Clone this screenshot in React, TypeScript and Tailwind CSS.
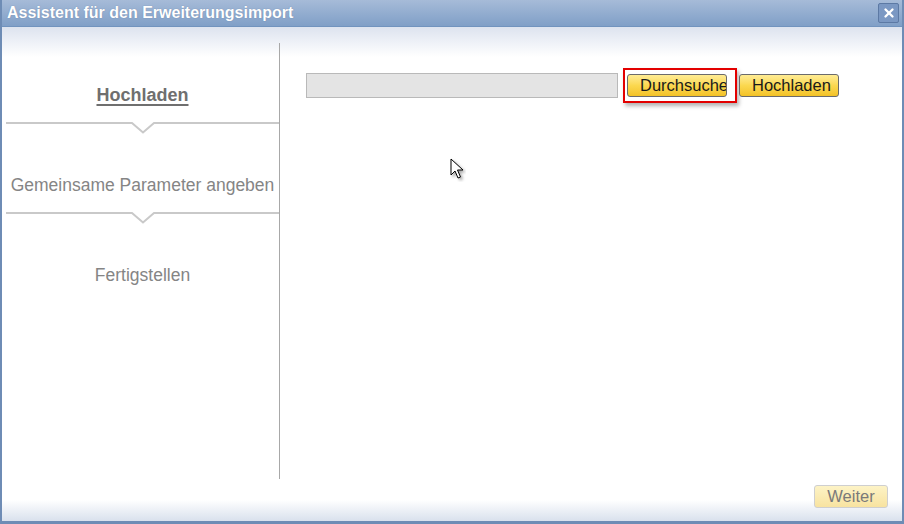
import { X } from 'lucide-react';

const steps = [
  { label: 'Hochladen', active: true, pt: 'pt-[41px]', h: 'h-[79px]' },
  { label: 'Gemeinsame Parameter angeben', active: false, pt: 'pt-[40px]', h: 'h-[78px]' },
  { label: 'Fertigstellen', active: false, pt: 'pt-[40px]', h: '' },
];

function Separator() {
  return (
    <svg width="273" height="12" className="block" viewBox="0 0 273 12">
      <polyline
        points="0,1 126,1 137,10.5 148,1 273,1"
        fill="none"
        stroke="#c9c9c9"
        strokeWidth="2"
      />
    </svg>
  );
}

function YellowButton({ label, width }: { label: string; width: string }) {
  return (
    <button
      className={`${width} h-[23px] shrink-0 overflow-hidden whitespace-nowrap rounded-[3px] border border-[#6b6b6b] bg-gradient-to-b from-[#ffec93] via-[#fbd84f] to-[#f3c225] pl-[12px] text-left text-[16.5px] leading-[21px] text-[#1a1a1a]`}
    >
      {label}
    </button>
  );
}

export default function App() {
  return (
    <div className="relative flex h-[524px] w-[904px] flex-col border-x-2 border-b-[3px] border-[#6e8cb5] bg-white font-['Liberation_Sans',Arial,sans-serif]">
      {/* title bar */}
      <div className="flex h-[27px] shrink-0 items-center justify-between border-b border-[#7193be] bg-gradient-to-b from-[#a6bbd8] to-[#809fc7] pl-[5px] pr-[3px]">
        <span className="text-[16px] font-bold text-white [text-shadow:0_0_1px_rgba(60,80,120,0.5)]">
          Assistent für den Erweiterungsimport
        </span>
        <div className="flex h-[20px] w-[21px] items-center justify-center rounded-[2px] border border-[#5c79a4] bg-[#7b98c3]">
          <X className="h-[14px] w-[14px] text-white" strokeWidth={4} />
        </div>
      </div>

      {/* body */}
      <div className="flex flex-1 flex-col bg-[linear-gradient(#dde3ef,#ffffff_30px)]">
        <div className="mt-[16px] flex h-[436px]">
          <div className="flex w-[278px] shrink-0 flex-col border-r border-[#a8a8a8] pl-[4px]">
            {steps.map((step, i) => (
              <div key={step.label}>
                <div className={`${step.pt} ${step.h} text-center`}>
                  {step.active ? (
                    <span className="text-[18px] font-bold leading-[22px] text-[#6f6f6f] underline decoration-2 underline-offset-[3px]">
                      {step.label}
                    </span>
                  ) : (
                    <span className="text-[17.5px] leading-[22px] text-[#858585]">{step.label}</span>
                  )}
                </div>
                {i < steps.length - 1 && <Separator />}
              </div>
            ))}
          </div>

          <div className="flex-1 pl-[26px] pt-[25px]">
            <div className="flex h-[35px] items-center">
              <div className="h-[25px] w-[312px] border border-[#b9b9b9] bg-[#e4e4e4]" />
              <div className="ml-[5px] flex h-[35px] w-[114px] items-center border-2 border-[#e30000] pl-[2px] shadow-[2px_3px_4px_rgba(0,0,0,0.3)]">
                <YellowButton label="Durchsuchen" width="w-[100px]" />
              </div>
              <div className="ml-[2px]">
                <YellowButton label="Hochladen" width="w-[100px]" />
              </div>
            </div>
          </div>
        </div>

        {/* footer */}
        <div className="flex flex-1 items-start justify-end bg-gradient-to-b from-white via-white to-[#d9e1ed] pr-[14px] pt-[6px]">
          <button className="h-[23px] w-[74px] rounded-[3px] border border-[#cfcfcf] bg-gradient-to-b from-[#fdf3c6] to-[#f8e3a0] text-[16.5px] leading-[21px] text-[#7a7a7a]">
            Weiter
          </button>
        </div>
      </div>

      {/* mouse cursor */}
      <svg className="absolute left-[448px] top-[158px]" width="16" height="24" viewBox="0 0 16 24">
        <path
          d="M1 1 L1 17 L5 13 L8 20 L10.5 19 L7.5 12 L13 12 Z"
          fill="#ffffff"
          stroke="#000000"
          strokeWidth="1"
          strokeLinejoin="round"
          style={{ filter: 'drop-shadow(2px 2px 1.5px rgba(0,0,0,0.35))' }}
        />
      </svg>
    </div>
  );
}
